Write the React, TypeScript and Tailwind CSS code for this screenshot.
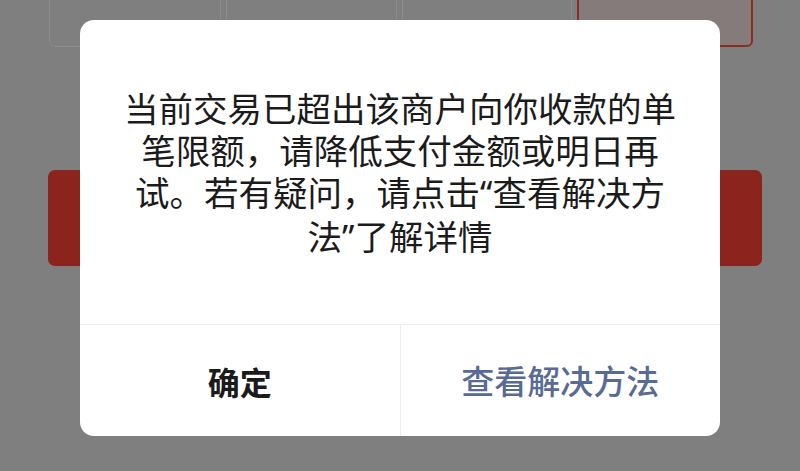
import React from "react";

const font = { fontFamily: '"Noto Sans CJK SC", "Noto Sans", sans-serif' };

// Latin-width curly quotes sitting inside the CJK message
function Q({ children }: { children: React.ReactNode }) {
  return <span className="font-['Noto_Sans',sans-serif]">{children}</span>;
}

export default function App() {
  return (
    <div
      className="relative w-[800px] h-[471px] overflow-hidden bg-[#7f7f7f]"
      style={font}
    >
      {/* page behind the overlay */}
      <div className="flex flex-col">
        <div className="flex gap-[5px] pl-[49px] mt-[-20px]">
          <div className="w-[172px] h-[67px] rounded-[6px] border border-[#8c8c8c] bg-[#7f7f7f]" />
          <div className="w-[171px] h-[67px] rounded-[6px] border border-[#8c8c8c] bg-[#7f7f7f]" />
          <div className="w-[170px] h-[67px] rounded-[6px] border border-[#8c8c8c] bg-[#7f7f7f]" />
          <div className="w-[176px] h-[67px] rounded-[6px] border-2 border-[#8e2c24] bg-[#857b7a]" />
        </div>
        <div className="mt-[123px] ml-[48px] w-[714px] h-[96px] rounded-[7px] bg-[#8a241c]" />
      </div>

      {/* alert dialog */}
      <div className="absolute left-[80px] top-[20px] w-[640px] h-[416px] rounded-[14px] bg-white flex flex-col overflow-hidden">
        <div className="h-[304px] flex items-center justify-center px-[40px]">
          <p className="text-center text-[34.5px] leading-[42px] text-[#1b1b1b]">
            当前交易已超出该商户向你收款的单笔限额，请降低支付金额或明日再试。若有疑问，请点击<Q>“</Q>查看解决方法<Q>”</Q>了解详情
          </p>
        </div>
        <div className="flex-1 flex border-t border-[#f0f0f0]">
          <button className="flex-1 flex items-center justify-center text-[32px] font-bold text-[#1b1b1b]">
            确定
          </button>
          <div className="w-px bg-[#ececec]" />
          <button className="flex-1 flex items-center justify-center text-[33px] font-medium text-[#576b95]">
            查看解决方法
          </button>
        </div>
      </div>
    </div>
  );
}
